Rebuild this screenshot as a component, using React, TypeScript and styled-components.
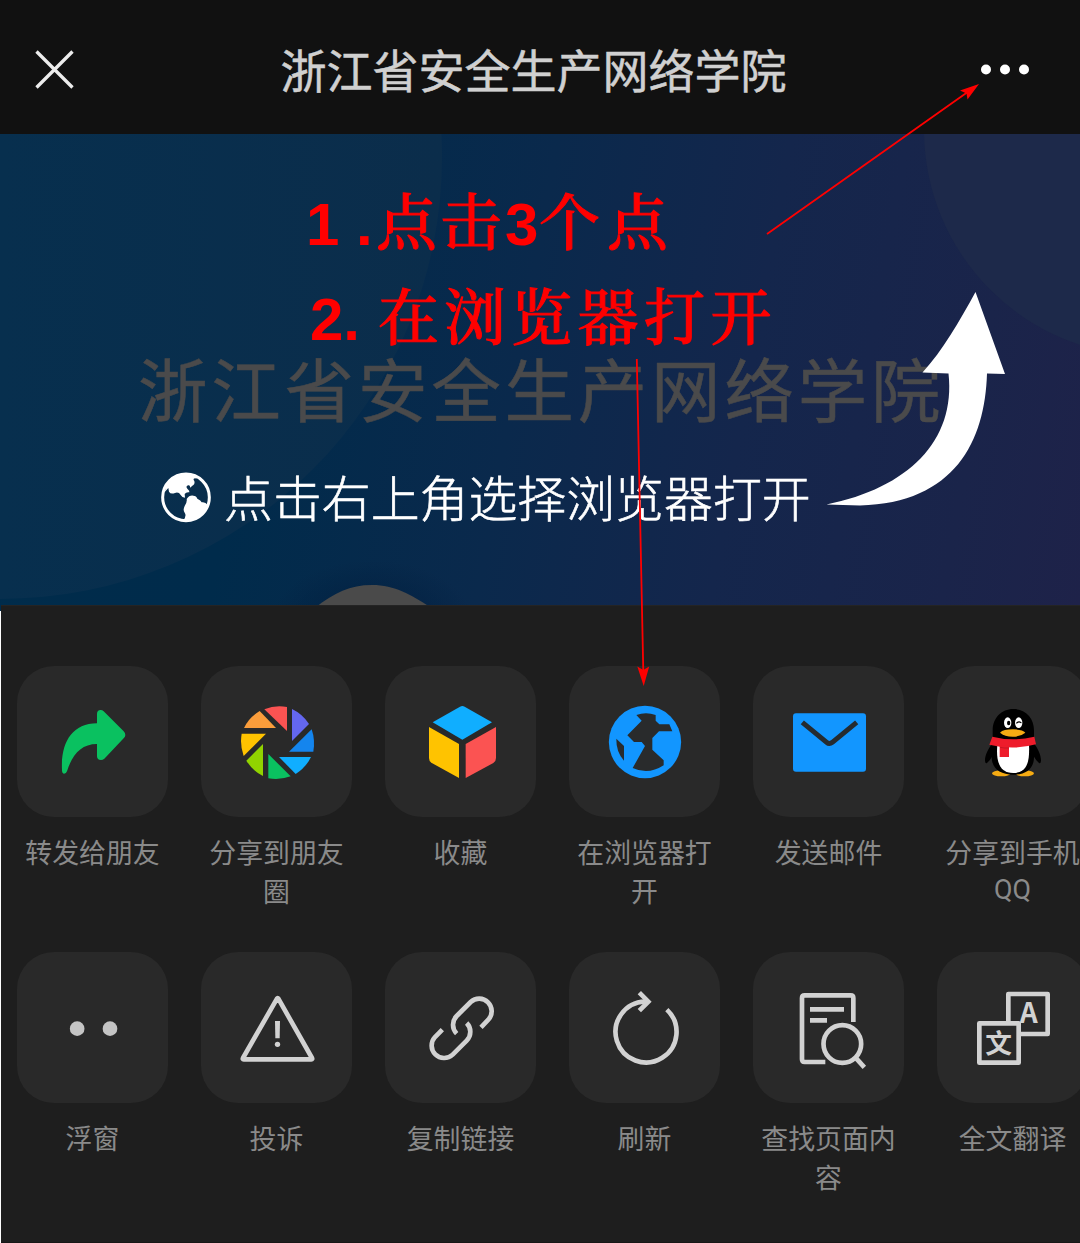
import React from 'react';
import styled, { createGlobalStyle } from 'styled-components';

const GlobalStyle = createGlobalStyle`
  *, *::before, *::after { box-sizing: border-box; }
  html, body { margin: 0; padding: 0; background: #fff; }
  body { font-family: Roboto, "Noto Sans CJK SC", sans-serif; overflow: hidden; }
`;

const Screen = styled.main`
  position: relative;
  display: flex;
  flex-direction: column;
  width: 1080px;
  height: 1243px;
  overflow: hidden;
`;

const TitleBar = styled.header`
  display: flex;
  align-items: center;
  justify-content: space-between;
  flex: none;
  height: 134px;
  padding: 5px 50px 0 34px;
  background: #111;
`;

const BarButton = styled.button`
  display: flex;
  padding: 0;
  border: 0;
  background: none;
`;

const Title = styled.h1`
  margin: 0 0 4px 12px;
  font: 400 46px/60px "Noto Sans CJK SC", sans-serif;
  color: #d0d0d0;
  -webkit-text-stroke: 0.5px #d0d0d0;
`;

const Hero = styled.section`
  position: relative;
  display: flex;
  flex-direction: column;
  flex: none;
  height: 477px;
  padding-top: 203px;
  background: linear-gradient(100deg, #002c4b 0%, #002b4b 25%, #0a294c 48%, #14264c 68%, #1a244a 88%, #1e2249 100%);
`;

const HeroArt = styled.svg`
  position: absolute;
  inset: 0;
`;

const HeroName = styled.h2`
  position: relative;
  margin: 0 0 0 138px;
  font: 400 69.5px/100px "Noto Sans CJK SC", sans-serif;
  letter-spacing: 3.8px;
  color: #4a4a4b;
  -webkit-text-stroke: 0.5px #4a4a4b;
  white-space: nowrap;
`;

const Hint = styled.p`
  position: relative;
  display: flex;
  align-items: center;
  gap: 12px;
  margin: 28px 0 0 160px;
  font: 300 48.9px/70px "Noto Sans CJK SC", sans-serif;
  color: #fff;
  white-space: nowrap;
`;

const HintText = styled.span`
  margin-top: -4px;
  -webkit-text-stroke: 0.6px #fff;
`;

const Sheet = styled.section`
  position: relative;
  flex: 1;
  margin: -6px 0 0 1px;
  padding: 60px 0 0 16px;
  background: #1e1e1e;
  border-top: 1px solid #242424;
  border-bottom: 1px solid #171717;
  overflow: hidden;
`;

const ActionRow = styled.div`
  display: flex;
  gap: 33px;
  height: 286px;
`;

const Action = styled.div`
  display: flex;
  flex-direction: column;
  flex: none;
  width: 151px;
`;

const Tile = styled.div`
  width: 151px;
  height: 151px;
  border-radius: 37px;
  background: #292929;
`;

const Label = styled.div`
  margin-top: 18px;
  font: 400 26.9px/39px Roboto, "Noto Sans CJK SC", sans-serif;
  color: #8a8a8a;
  text-align: center;
`;

const LatinLine = styled.span`
  display: block;
  line-height: 33px;
`;

const Notes = styled.div`
  position: absolute;
  top: 186px;
  left: 306px;
  display: flex;
  flex-direction: column;
  gap: 28px;
  color: #f00;
  pointer-events: none;
`;

const Note = styled.div<{ $spacing: number; $indent?: number }>`
  display: flex;
  align-items: baseline;
  height: 67px;
  margin-left: ${(p) => p.$indent ?? 0}px;
  font: 500 61px/66px "Noto Serif CJK SC", "Noto Sans CJK SC", serif;
  letter-spacing: ${(p) => p.$spacing}px;
  -webkit-text-stroke: 1px #f00;
  white-space: nowrap;
`;

const Digit = styled.span<{ $width: number }>`
  flex: none;
  width: ${(p) => p.$width}px;
  font: 700 60px/60px "Liberation Sans", sans-serif;
  letter-spacing: 0;
  -webkit-text-stroke: 0;
`;

const Pointers = styled.svg`
  position: absolute;
  inset: 0;
  pointer-events: none;
`;

const lightStroke = { fill: 'none', stroke: '#d2d2d2', strokeWidth: 14 } as const;

const Icon = ({ children }: { children: React.ReactNode }) => (
  <svg width="151" height="151" viewBox="0 0 453 453">{children}</svg>
);

const ForwardIcon = () => (
  <Icon>
    <g transform="translate(-51 -198)">
      <path fill="#0ac160" d="M291 342Q291 330 302 330Q307 330 311 334L371 394Q381 405 371 415L313 476Q308 480 303 480Q291 480 291 469V432C243 432 216 465 201 514Q198 522 191 521Q185 519 186 510C182 430 215 370 291 370Z" />
    </g>
  </Icon>
);

const MomentsIcon = () => (
  <Icon>
    <g transform="translate(-603 -198)">
      <path fill="#fb5352" d="M793 328Q826 314 861 321V393Z" />
      <path fill="#6467f0" d="M876 327Q908 342 927 372L876 423Z" />
      <path fill="#1485ee" d="M935 388Q946 420 940 455H867Z" />
      <path fill="#10aeff" d="M837 471H933Q918 502 887 522Z" />
      <path fill="#0ac160" d="M805 462L872 529Q840 541 805 535Z" />
      <path fill="#91d300" d="M789 432V528Q758 513 739 482Z" />
      <path fill="#ffc300" d="M798 401L731 468Q719 434 725 401Z" />
      <path fill="#fa9d3b" d="M732 384Q746 353 779 333L828 384Z" />
    </g>
  </Icon>
);

const FavoriteIcon = () => (
  <Icon>
    <g transform="translate(-75 -78)">
      <path fill="#10aeff" d="M300 200Q307 196 314 200L396 247L307 299L218 247Z" />
      <path fill="#ffc300" d="M207 261L297 312V414L214 368Q207 363 207 354Z" />
      <path fill="#fb5352" d="M408 261L317 312V414L400 369Q408 364 408 354Z" />
    </g>
  </Icon>
);

const BrowserIcon = () => (
  <Icon>
    <g transform="translate(-627 -78)">
      <circle cx="855" cy="306" r="108.5" fill="#1296ff" />
      <path fill="#292b2c" d="M829 225Q858 215 887 225V242L898 253H928L937 274H897L877 294V329L911 361V376Q865 406 818 384L855 318L845 306H822L802 286L845 242Z" />
      <path fill="#292b2c" d="M769 296L792 318V362Q768 335 769 296Z" />
    </g>
  </Icon>
);

const MailIcon = () => (
  <Icon>
    <g transform="translate(-99 -78)">
      <rect x="219" y="220" width="219" height="175" rx="9" fill="#1296ff" />
      <path fill="none" stroke="#252b30" strokeWidth="15" d="M247 247L320 307Q328 314 337 307L410 247" />
    </g>
  </Icon>
);

const QQIcon = () => (
  <Icon>
    <g transform="translate(-651 -78)">
      <path fill="#000" d="M818 310C806 324 795 344 795 362Q796 372 801 369Q810 362 815 352L835 320ZM941 310C953 324 963 344 963 362Q962 372 957 369Q948 362 943 352L925 320Z" />
      <ellipse cx="844" cy="400" rx="28" ry="9" fill="#f5ab13" />
      <ellipse cx="914" cy="400" rx="28" ry="9" fill="#f5ab13" />
      <path fill="#000" d="M818 300V271C818 234 844 207 880 207C917 207 942 234 942 271V350C942 385 920 404 880 404C840 404 815 385 815 350Z" />
      <path fill="#fff" d="M832 315H927C929 360 924 399 880 399C836 399 828 360 832 315Z" />
      <ellipse cx="863" cy="248" rx="11" ry="16" fill="#fff" />
      <ellipse cx="896" cy="248" rx="11" ry="16" fill="#fff" />
      <ellipse cx="866" cy="249" rx="5" ry="7" fill="#000" />
      <path fill="none" stroke="#000" strokeWidth="3.5" strokeLinecap="round" d="M890 249Q897 243 903 248" />
      <path fill="#f5ab13" d="M840 278Q850 268 879 268Q908 268 916 278Q902 290 878 290Q854 290 840 278Z" />
      <path fill="#ee1c2b" d="M817 290Q880 306 943 290L948 313Q880 332 808 314Z" />
      <path fill="#ee1c2b" d="M839 316H867V351H839Z" />
      <path fill="none" stroke="#b5121f" strokeWidth="2" d="M840 322Q853 325 867 324" />
    </g>
  </Icon>
);

const FloatIcon = () => (
  <Icon>
    <g transform="translate(-51 -36)" fill="#c4c4c4">
      <circle cx="231.5" cy="266" r="22" />
      <circle cx="330" cy="266" r="22" />
    </g>
  </Icon>
);

const ReportIcon = () => (
  <Icon>
    <g transform="translate(-603 -36)">
      <path {...lightStroke} strokeLinejoin="round" d="M831 176Q833 173 835 176L936 354Q938 358 934 358H731Q727 358 729 354Z" />
      <path fill="#d2d2d2" d="M825 243H840L839 295H826Z" />
      <circle cx="832.5" cy="313" r="8" fill="#d2d2d2" />
    </g>
  </Icon>
);

const LinkIcon = () => (
  <Icon>
    <g transform="translate(-75 -36)">
      <path {...lightStroke} d="M363 262L385 239A37.5 37.5 0 0 0 332 186L290 228A37.5 37.5 0 0 0 290 281" />
      <path {...lightStroke} d="M247 269L225 291A37.5 37.5 0 0 0 278 344L320 302A37.5 37.5 0 0 0 320 249" />
    </g>
  </Icon>
);

const RefreshIcon = () => (
  <Icon>
    <g transform="translate(-629 -37)">
      <path {...lightStroke} d="M922.5 210A91.5 91.5 0 1 1 857 185.5H866" />
      <path {...lightStroke} d="M840 159L867 186L840 213" />
    </g>
  </Icon>
);

const FindIcon = () => (
  <Icon>
    <g transform="translate(-99 -36)">
      <path {...lightStroke} d="M400 246V174Q400 166 392 166H254Q246 166 246 174V358Q246 366 254 366H316" />
      <path {...lightStroke} d="M270 208H372M270 241H321" />
      <circle {...lightStroke} cx="367" cy="312" r="56.5" />
      <path {...lightStroke} d="M406 352L433 382" />
    </g>
  </Icon>
);

const TranslateIcon = () => (
  <Icon>
    <g transform="translate(-651 -36)">
      <path {...lightStroke} strokeLinejoin="round" d="M865 250V162H983V282H898" />
      <rect {...lightStroke} strokeLinejoin="round" x="778" y="250" width="118" height="118" />
      <g fill="#d2d2d2" fontFamily='"Noto Sans CJK SC", sans-serif' fontWeight="700" textAnchor="middle">
        <text x="926" y="250" fontSize="84">A</text>
        <text x="836" y="338" fontSize="80">文</text>
      </g>
    </g>
  </Icon>
);

interface ActionItem {
  label: React.ReactNode;
  icon: React.ReactNode;
}

const shareActions: ActionItem[] = [
  { label: '转发给朋友', icon: <ForwardIcon /> },
  { label: '分享到朋友圈', icon: <MomentsIcon /> },
  { label: '收藏', icon: <FavoriteIcon /> },
  { label: '在浏览器打开', icon: <BrowserIcon /> },
  { label: '发送邮件', icon: <MailIcon /> },
  { label: <>分享到手机<LatinLine>QQ</LatinLine></>, icon: <QQIcon /> },
];

const pageActions: ActionItem[] = [
  { label: '浮窗', icon: <FloatIcon /> },
  { label: '投诉', icon: <ReportIcon /> },
  { label: '复制链接', icon: <LinkIcon /> },
  { label: '刷新', icon: <RefreshIcon /> },
  { label: '查找页面内容', icon: <FindIcon /> },
  { label: '全文翻译', icon: <TranslateIcon /> },
];

const Actions = ({ items }: { items: ActionItem[] }) => (
  <ActionRow>
    {items.map((item, i) => (
      <Action key={i}>
        <Tile>{item.icon}</Tile>
        <Label>{item.label}</Label>
      </Action>
    ))}
  </ActionRow>
);

const GlobeMark = () => (
  <svg width="52" height="52" viewBox="16 16 156 156">
    <circle cx="94" cy="92" r="70" fill="none" stroke="#fff" strokeWidth="9" />
    <path fill="#fff" d="M36 54Q60 22 98 21L130 29Q127 38 122 35Q113 36 119 43Q122 53 112 58L107 63Q106 54 100 56Q92 60 98 66Q106 72 104 77Q95 75 90 82L91 93Q82 93 78 85Q72 75 61 79Q48 84 43 75L41 64L30 76Z" />
    <path fill="#fff" d="M96 97Q104 85 116 87Q125 87 128 96Q139 101 141 107Q151 104 160 116Q142 160 96 165L85 163Q97 148 90 138Q84 130 90 118Q98 106 96 97Z" />
  </svg>
);

export default function App() {
  return (
    <>
      <GlobalStyle />
      <Screen>
        <TitleBar>
          <BarButton aria-label="关闭">
            <svg width="41" height="41" viewBox="0 0 41 41">
              <path d="M2.5 2.5L38.5 38.5M38.5 2.5L2.5 38.5" stroke="#ededed" strokeWidth="3.3" />
            </svg>
          </BarButton>
          <Title>浙江省安全生产网络学院</Title>
          <BarButton aria-label="更多">
            <svg width="50" height="12" viewBox="0 0 50 12" fill="#fff">
              <circle cx="6" cy="5.5" r="5" />
              <circle cx="25" cy="5.5" r="5" />
              <circle cx="44" cy="5.5" r="5" />
            </svg>
          </BarButton>
        </TitleBar>

        <Hero>
          <HeroArt width="1080" height="477" viewBox="0 134 1080 477">
            <defs>
              <linearGradient id="orb" x1="0" x2="1">
                <stop offset="0.5" stopColor="#072f4e" />
                <stop offset="1" stopColor="#0b2d4b" />
              </linearGradient>
              <radialGradient id="halo">
                <stop offset="0.55" stopColor="#001c3c" stopOpacity="0.35" />
                <stop offset="1" stopColor="#001c3c" stopOpacity="0" />
              </radialGradient>
            </defs>
            <circle cx="0" cy="157" r="442" fill="url(#orb)" />
            <circle cx="1150" cy="130" r="226" fill="#1d294a" />
            <ellipse cx="372" cy="620" rx="100" ry="60" fill="url(#halo)" />
            <path fill="#4a4a4a" d="M316 607C334 593 350 585 372 585C395 585 411 595 430 607Z" />
          </HeroArt>
          <HeroName>浙江省安全生产网络学院</HeroName>
          <Hint>
            <GlobeMark />
            <HintText>点击右上角选择浏览器打开</HintText>
          </Hint>
          <HeroArt width="1080" height="477" viewBox="0 134 1080 477">
            <path fill="#fff" d="M975.5 292L1005 374L987 373.5C985 441 955 503 860 505.5L826.5 504.5C908 488 956 441 948.5 373.5L922.5 372.5C943 350 959 322 975.5 292Z" />
          </HeroArt>
        </Hero>

        <Sheet>
          <Actions items={shareActions} />
          <Actions items={pageActions} />
        </Sheet>

        <Notes>
          <Note $spacing={3.5}>
            <Digit $width={50}>1</Digit>
            <Digit $width={20}>.</Digit>
            点击
            <Digit $width={34}>3</Digit>
            <span style={{ letterSpacing: 7 }}>个点</span>
          </Note>
          <Note $spacing={5.5} $indent={4}>
            <Digit $width={68}>2.</Digit>
            在浏览器打开
          </Note>
        </Notes>

        <Pointers width="1080" height="1243" fill="#f00" stroke="none">
          <path stroke="#f00" strokeWidth="1.8" d="M767 234L967 92.5M636.8 359L643.3 672" />
          <path d="M979 84L960 90.5L966.5 93.5L967.5 99.5Z" />
          <path d="M643.7 686L637.3 666.5L643.3 670L649.2 666.5Z" />
        </Pointers>
      </Screen>
    </>
  );
}
